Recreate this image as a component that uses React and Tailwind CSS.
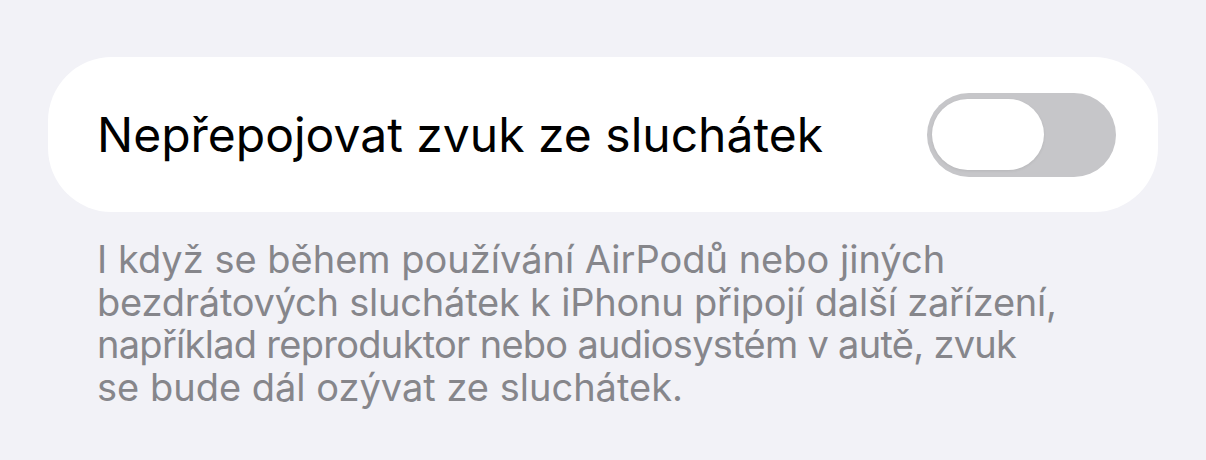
export default function App() {
  return (
    <div className="w-[1206px] h-[460px] bg-[#f2f2f7] overflow-hidden" style={{ fontFamily: 'Inter, "Noto Sans", sans-serif' }}>
      <div className="pt-[57px] px-[48px]">
        <div className="h-[155px] bg-white rounded-[64px] flex items-center justify-between pl-[49px] pr-[42px]">
          <span className="text-[48px] text-black leading-none">Nepřepojovat zvuk ze sluchátek</span>
          <div className="w-[189px] h-[84px] rounded-full bg-[#c6c6c9] flex items-center pl-[5px]">
            <div className="w-[112px] h-[71px] rounded-full bg-white shadow-[0_1px_3px_rgba(0,0,0,0.08)]"></div>
          </div>
        </div>
        <p className="mt-[26px] pl-[49px] text-[38px] leading-[42.5px] text-[#86868b] whitespace-nowrap">
          <span className="block">I když se během používání AirPodů nebo jiných</span>
          <span className="block tracking-[-0.22px]">bezdrátových sluchátek k iPhonu připojí další zařízení,</span>
          <span className="block tracking-[-0.72px]">například reproduktor nebo audiosystém v autě, zvuk</span>
          <span className="block">se bude dál ozývat ze sluchátek.</span>
        </p>
      </div>
    </div>
  );
}
